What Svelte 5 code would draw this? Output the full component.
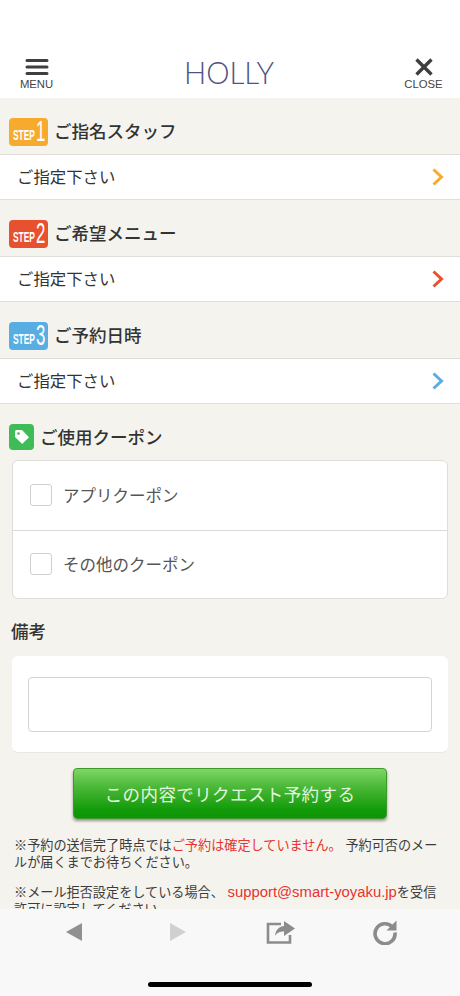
<script>
  const steps = [
    { no: 1, title: 'ご指名スタッフ', color: '#f7ab2e' },
    { no: 2, title: 'ご希望メニュー', color: '#e8512f' },
    { no: 3, title: 'ご予約日時', color: '#58aee3' }
  ];
  const coupons = ['アプリクーポン', 'その他のクーポン'];
</script>

<div class="page">
  <header class="header">
    <div class="side">
      <svg class="icon" width="24" height="18" viewBox="0 0 24 18"><path d="M2 2.500h20M2 9h20M2 15.500h20" stroke="#3f3f3f" stroke-width="3" stroke-linecap="round" fill="none"/></svg>
      <span>MENU</span>
    </div>
    <div class="logo">HOLLY</div>
    <div class="side close">
      <svg class="icon" width="24" height="18" viewBox="0 0 24 18"><path d="M4.500 1.500l15 15M19.500 1.500l-15 15" stroke="#3f3f3f" stroke-width="3.400" fill="none"/></svg>
      <span>CLOSE</span>
    </div>
  </header>

  <main class="main">
    {#each steps as step}
      <section class="step">
        <h2 class="heading">
          <span class="badge" style="background: {step.color}"><small>STEP</small><b>{step.no}</b></span>
          <span class="label">{step.title}</span>
        </h2>
        <div class="row">
          <span>ご指定下さい</span>
          <svg width="14" height="20" viewBox="0 0 14 20"><path d="M2.500 2.500L10.500 10l-8 7.500" stroke={step.color} stroke-width="3" fill="none"/></svg>
        </div>
      </section>
    {/each}

    <h2 class="heading coupon-heading">
      <span class="tag">
        <svg width="18" height="18" viewBox="0 0 18 18"><path d="M2 3.500Q2 2 3.500 2H9l7 7.200L9.200 16 2 9z" fill="#fff"/><circle cx="5.500" cy="5.500" r="1.300" fill="#3fbb57"/></svg>
      </span>
      <span class="label">ご使用クーポン</span>
    </h2>
    <div class="coupons">
      {#each coupons as coupon}
        <div class="coupon"><span class="check"></span>{coupon}</div>
      {/each}
    </div>

    <h2 class="heading note-heading">備考</h2>
    <div class="note-card"><div class="input"></div></div>

    <button class="submit">この内容でリクエスト予約する</button>

    <p class="info">※予約の送信完了時点では<em>ご予約は確定していません。</em> 予約可否のメールが届くまでお待ちください。</p>
    <p class="info">※メール拒否設定をしている場合、 <em class="mail">support@smart-yoyaku.jp</em>を受信許可に設定してください。</p>
  </main>

  <nav class="toolbar">
    <div class="tools">
      <svg width="18" height="20" viewBox="0 0 18 20"><path d="M17 1v18L1 10z" fill="#909090"/></svg>
      <svg width="18" height="20" viewBox="0 0 18 20"><path d="M1 1v18l16-9z" fill="#d0d0d0"/></svg>
      <svg width="30" height="24" viewBox="0 0 30 24"><path d="M15 4H2v18.500h22V15" stroke="#8c8c8c" stroke-width="2.600" fill="none"/><path d="M18 1l11 7.500L18 16v-4.500c-4 0-7 1-9 4.500 .5-6 4-9.500 9-10z" fill="#8c8c8c"/></svg>
      <svg width="26" height="26" viewBox="0 0 26 26"><path d="M20.500 8A10 10 0 1 0 23 13.500" stroke="#8c8c8c" stroke-width="3.600" fill="none"/><path d="M24.500 1.500v10h-10z" fill="#8c8c8c"/></svg>
    </div>
    <div class="home"></div>
  </nav>
</div>

<style>
  :global(body) {
    margin: 0;
    background: #fff;
  }

  .page {
    position: relative;
    width: 460px;
    height: 996px;
    overflow: hidden;
    background: #f4f3ee;
    font-family: "Liberation Sans", "Noto Sans CJK JP", sans-serif;
    color: #333;
  }

  .header {
    box-sizing: border-box;
    height: 98px;
    padding: 58px 18px 0 20px;
    display: flex;
    justify-content: space-between;
    background: #fff;
  }

  .side {
    width: 33px;
    display: flex;
    flex-direction: column;
    align-items: center;
    font-size: 11.300px;
    line-height: 13px;
    color: #444;
  }

  .side .icon {
    margin-bottom: 2px;
  }

  .close {
    width: 37px;
  }

  .logo {
    margin-top: -3px;
    font-family: Lato, sans-serif;
    font-weight: 300;
    font-size: 32px;
    line-height: 34px;
    color: #4f5283;
    transform: scaleX(0.92);
  }

  .main {
    display: flex;
    flex-direction: column;
  }

  .heading {
    margin: 0;
    display: flex;
    align-items: center;
    gap: 6px;
    font-size: 17.500px;
    font-weight: 500;
    color: #333;
  }

  .label {
    margin-top: -2px;
  }

  .step .heading {
    box-sizing: border-box;
    height: 56px;
    padding: 15px 0 4px 9px;
  }

  .badge {
    box-sizing: border-box;
    width: 39px;
    height: 28px;
    padding: 0 0 3px 4px;
    border-radius: 4px;
    display: flex;
    align-items: flex-end;
    color: #fff;
  }

  .badge small {
    display: block;
    margin-right: -15px;
    font-size: 14.500px;
    line-height: 15px;
    font-weight: 700;
    transform: scaleX(0.58);
    transform-origin: left;
  }

  .badge b {
    display: block;
    font-size: 29px;
    font-weight: 400;
    line-height: 24px;
    transform: scaleX(0.58);
    transform-origin: left;
  }

  .row {
    box-sizing: border-box;
    height: 46px;
    padding: 0 15px 0 17px;
    display: flex;
    align-items: center;
    justify-content: space-between;
    background: #fff;
    border-top: 1px solid #dfded9;
    border-bottom: 1px solid #dfded9;
    font-size: 16.400px;
    color: #333;
  }

  .row span {
    margin-top: -2px;
  }

  .coupon-heading {
    height: 26px;
    margin-top: 20px;
    padding-left: 9px;
  }

  .tag {
    width: 25px;
    height: 26px;
    border-radius: 4px;
    background: #3fbb57;
    display: flex;
    align-items: center;
    justify-content: center;
  }

  .coupons {
    margin: 10px 12px 0;
    background: #fff;
    border: 1px solid #deddd8;
    border-radius: 6px;
  }

  .coupon {
    box-sizing: border-box;
    height: 68.500px;
    padding-left: 17px;
    display: flex;
    align-items: center;
    gap: 11px;
    font-size: 16.500px;
    color: #555;
  }

  .coupon + .coupon {
    border-top: 1px solid #d9d9d9;
  }

  .check {
    box-sizing: border-box;
    width: 22px;
    height: 22px;
    background: #fff;
    border: 1px solid #cfcfcf;
    border-radius: 3px;
  }

  .note-heading {
    height: 24px;
    margin-top: 19px;
    padding-left: 11px;
  }

  .note-card {
    box-sizing: border-box;
    height: 97px;
    margin: 14px 12px 0;
    padding: 21px 16px 0;
    background: #fff;
    border-radius: 6px;
    border-bottom: 1px solid #e8e7e2;
  }

  .input {
    box-sizing: border-box;
    height: 55px;
    border: 1px solid #d4d4d4;
    border-radius: 4px;
  }

  .submit {
    align-self: center;
    width: 314px;
    height: 51px;
    margin: 15px 0 0;
    padding: 0;
    border: 1px solid #3c9a2c;
    border-radius: 4px;
    background: linear-gradient(to bottom, #7ed766 0%, #4db93a 35%, #109a08 85%, #0f9406 100%);
    box-shadow: 0 2px 3px rgba(0, 0, 0, 0.4);
    font-family: inherit;
    font-size: 17.500px;
    letter-spacing: 0.4px;
    color: #e3f6dd;
  }

  .info {
    margin: 0;
    padding: 0 18px 0 14px;
    font-size: 13.150px;
    line-height: 17px;
    color: #3c3c3c;
  }

  .submit + .info {
    margin-top: 18px;
  }

  .info + .info {
    margin-top: 13px;
  }

  .info em {
    font-style: normal;
    color: #e8332e;
  }

  .info .mail {
    font-size: 14.850px;
  }

  .toolbar {
    position: absolute;
    left: 0;
    right: 0;
    bottom: 0;
    height: 87px;
    background: #f8f8f8;
  }

  .tools {
    display: grid;
    grid-template-columns: repeat(4, 1fr);
    justify-items: center;
    align-items: center;
    height: 46px;
    padding: 0 23px 0 22px;
  }

  .home {
    position: absolute;
    left: 148px;
    bottom: 9px;
    width: 164px;
    height: 5px;
    border-radius: 3px;
    background: #000;
  }
</style>
